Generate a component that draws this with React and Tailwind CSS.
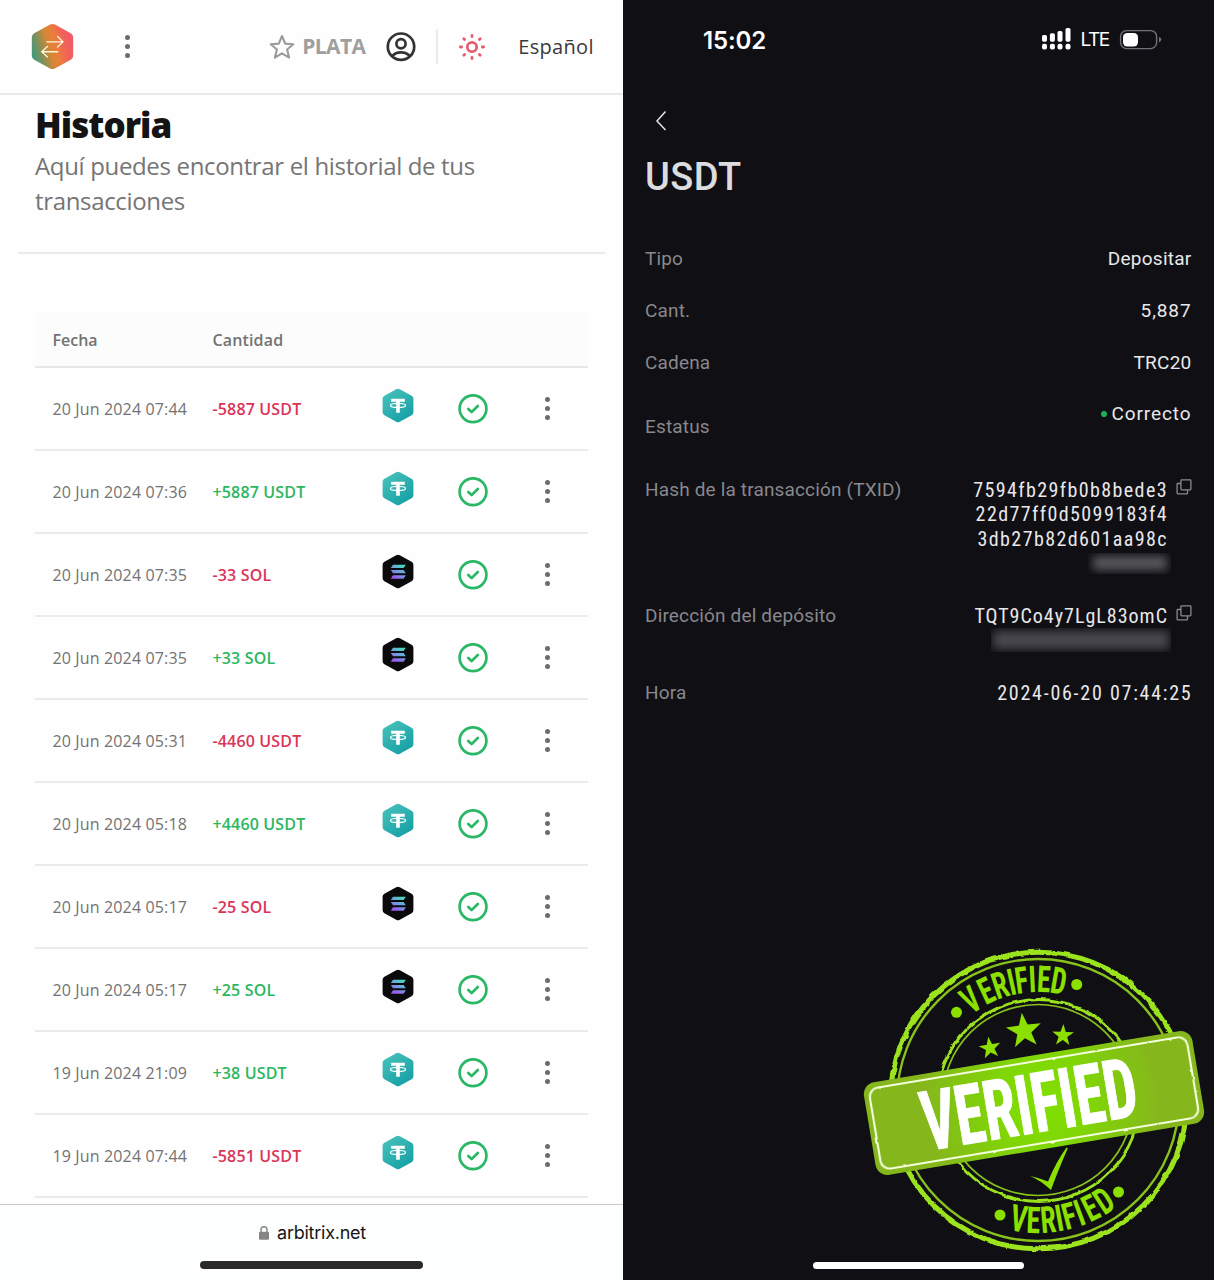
import React from "react";

const transactions = [
  ["20 Jun 2024 07:44", "-5887 USDT"],
  ["20 Jun 2024 07:36", "+5887 USDT"],
  ["20 Jun 2024 07:35", "-33 SOL"],
  ["20 Jun 2024 07:35", "+33 SOL"],
  ["20 Jun 2024 05:31", "-4460 USDT"],
  ["20 Jun 2024 05:18", "+4460 USDT"],
  ["20 Jun 2024 05:17", "-25 SOL"],
  ["20 Jun 2024 05:17", "+25 SOL"],
  ["19 Jun 2024 21:09", "+38 USDT"],
  ["19 Jun 2024 07:44", "-5851 USDT"],
];

const HEX = "M14.2 1.2Q16 .2 17.8 1.2L29.6 7.7Q31.4 8.7 31.4 10.7V24.3Q31.4 26.3 29.6 27.3L17.8 33.8Q16 34.8 14.2 33.8L2.4 27.3Q.6 26.3 .6 24.3V10.7Q.6 8.7 2.4 7.7Z";

function BrandLogo() {
  return (
    <svg viewBox="0 0 32 35" className="h-[47px] w-[43px]">
      <defs>
        <linearGradient id="brand" x1="0" y1=".65" x2="1" y2=".35">
          <stop offset="0" stopColor="#3f9a7c" />
          <stop offset=".2" stopColor="#80905a" />
          <stop offset=".42" stopColor="#d68734" />
          <stop offset=".58" stopColor="#ea7d3c" />
          <stop offset=".82" stopColor="#f2605c" />
          <stop offset="1" stopColor="#ee5c68" />
        </linearGradient>
      </defs>
      <path d={HEX} fill="url(#brand)" />
      <path d="M11.8 14H23.6M19.8 10.1L23.8 14L19.8 17.9M20 21.4H8.2M12.2 17.5L8 21.4L12.2 25.3" fill="none" stroke="#fff7d8" strokeWidth="1" strokeLinecap="round" />
    </svg>
  );
}

function TetherIcon() {
  return (
    <svg viewBox="0 0 32 35" className="h-[35px] w-8">
      <defs>
        <linearGradient id="tether" x1="0" y1="0" x2=".7" y2="1">
          <stop offset="0" stopColor="#4cc4bb" />
          <stop offset="1" stopColor="#16a0a6" />
        </linearGradient>
      </defs>
      <path d={HEX} fill="url(#tether)" />
      <path d="M9.2 10.8H22.8V13.7H17.8V24.8H14.2V13.7H9.2Z" fill="#fff" />
      <ellipse cx="16" cy="17.4" rx="7.5" ry="2.1" fill="none" stroke="#fff" strokeWidth="1.3" />
    </svg>
  );
}

function SolanaIcon() {
  return (
    <svg viewBox="0 0 32 35" className="h-[35px] w-8">
      <defs>
        <linearGradient id="solana" gradientUnits="userSpaceOnUse" x1="21" y1="10" x2="12" y2="25">
          <stop offset="0" stopColor="#3fe3b4" />
          <stop offset=".5" stopColor="#6f9fe0" />
          <stop offset="1" stopColor="#a04df0" />
        </linearGradient>
      </defs>
      <path d={HEX} fill="#0a0a0d" />
      <path d="M11 10.8H23.8L21.6 14.1H8.8ZM8.8 16H21.6L23.8 19.3H11ZM11 21.3H23.8L21.6 24.7H8.8Z" fill="url(#solana)" />
    </svg>
  );
}

function CheckIcon() {
  return (
    <svg viewBox="0 0 30 30" className="size-[30px]" fill="none" stroke="#2bb866">
      <circle cx="15" cy="14.7" r="13.4" strokeWidth="2.7" />
      <path d="M10.3 15L13.6 18.1L19.8 12" strokeWidth="2.7" strokeLinecap="round" strokeLinejoin="round" />
    </svg>
  );
}

function Kebab() {
  return (
    <span className="flex flex-col items-center gap-[3.5px]">
      <i className="size-[5.3px] rounded-full bg-[#6c6c6c]" />
      <i className="size-[5.3px] rounded-full bg-[#6c6c6c]" />
      <i className="size-[5.3px] rounded-full bg-[#6c6c6c]" />
    </span>
  );
}

function CopyIcon() {
  return (
    <svg viewBox="0 0 16 16" className="size-4 shrink-0" fill="none" stroke="#8b8a90" strokeWidth="1.3">
      <rect x="4.9" y=".9" width="10" height="10" rx=".8" />
      <path d="M4.9 4.5H1.8Q1.1 4.5 1.1 5.2V14Q1.1 14.9 2 14.9H10.8Q11.5 14.9 11.5 14.2V11" />
    </svg>
  );
}

function Header() {
  return (
    <header className="flex h-[95px] shrink-0 items-center border-b-2 border-[#e9e9e9] pl-[31px]">
      <BrandLogo />
      <div className="ml-[51px]"><Kebab /></div>
      <svg viewBox="0 0 26 26" className="ml-[139px] size-[26px]" fill="none" stroke="#9b9b9b" strokeWidth="2.1" strokeLinejoin="round">
        <path d="M13 2L16.2 9.6L24.3 10.2L18.1 15.5L20.1 23.6L13 19.3L5.9 23.6L7.9 15.5L1.7 10.2L9.8 9.6Z" />
      </svg>
      <span className="ml-[7px] w-[64px] text-[21px] font-bold tracking-[-0.65px] text-[#9f9f9f]">PLATA</span>
      <svg viewBox="0 0 30 30" className="ml-5 size-[30px]" fill="none" stroke="#333" strokeWidth="2.7">
        <circle cx="15" cy="14.7" r="13.2" />
        <circle cx="15" cy="11.7" r="4.6" />
        <path d="M6 24.2C10.5 19.1 19.5 19.1 24 24.2" />
      </svg>
      <span className="ml-5 h-[35px] w-[2px] bg-[#ebebeb]" />
      <svg viewBox="0 0 28 28" className="ml-5 size-7" fill="none" stroke="#e55a6d" strokeLinecap="round">
        <circle cx="14" cy="14" r="4.7" strokeWidth="2.7" />
        <path strokeWidth="2.8" d="M14 2.4V3.6M14 24.4V25.6M2.4 14H3.6M24.4 14H25.6M5.8 5.8L6.6 6.6M21.4 21.4L22.2 22.2M5.8 22.2L6.6 21.4M21.4 6.6L22.2 5.8" />
      </svg>
      <span className="ml-[32px] text-[20px] tracking-[0.3px] text-[#3a3a3a]">Español</span>
    </header>
  );
}

function TransactionRow({ date, amount }) {
  return (
    <div className="flex h-[83px] items-center border-b-2 border-[#ebebeb] pl-[17.5px]">
      <span className="w-[160px] tracking-[0.14px] text-[#737373]">{date}</span>
      <span className={amount[0] === "-" ? "w-[169px] font-semibold tracking-[0.15px] text-[#da3558]" : "w-[169px] font-semibold tracking-[0.15px] text-[#2bb760]"}>{amount}</span>
      <span className="mb-[6px] w-8">{amount.endsWith("SOL") ? <SolanaIcon /> : <TetherIcon />}</span>
      <span className="ml-[44.5px]"><CheckIcon /></span>
      <span className="ml-[56.5px]"><Kebab /></span>
    </div>
  );
}

function HistoryScreen() {
  return (
    <main className="flex h-[1280px] w-[623px] shrink-0 flex-col bg-[#fefefe] font-['Open_Sans',sans-serif]">
      <Header />
      <section className="mx-[18px] h-[159px] shrink-0 border-b-2 border-[#ebebeb] pl-[17px] pt-2">
        <h1 className="text-[35px] font-extrabold leading-[44px] tracking-[-1px] text-[#141414]">Historia</h1>
        <p className="pt-px text-[24px] leading-[35px] tracking-[-0.34px] text-[#757575]">Aquí puedes encontrar el historial de tus<br />transacciones</p>
      </section>
      <section className="ml-[35px] mt-[58px] w-[553px] shrink-0 text-[16px]">
        <div className="flex h-[56px] items-center border-b-2 border-[#e7e7e7] bg-[#fcfcfc] pl-[17.5px] pt-[2px] font-semibold text-[#737373]">
          <span className="w-[160px]">Fecha</span>
          <span className="tracking-[0.15px]">Cantidad</span>
        </div>
        {transactions.map(([date, amount], i) => <TransactionRow key={i} date={date} amount={amount} />)}
      </section>
      <footer className="mt-auto flex h-[76px] flex-col items-center border-t border-[#c6cacb] bg-[#fdfefe] pt-[14px] font-[Inter,sans-serif]">
        <div className="flex items-center gap-2 pl-[2px] text-[18px] leading-7 tracking-[-0.25px] text-[#161616]">
          <svg viewBox="0 0 10 14" className="h-[14px] w-[10px]">
            <rect y="5.8" width="10" height="8" rx="1.3" fill="#858585" />
            <path d="M2 6.5V3.8Q2 .8 5 .8Q8 .8 8 3.8V6.5" fill="none" stroke="#858585" strokeWidth="1.4" />
          </svg>
          arbitrix.net
        </div>
        <div className="mt-[14px] h-[8px] w-[223px] rounded-full bg-[#292929]" />
      </footer>
    </main>
  );
}

function StatusBar() {
  return (
    <div className="flex h-[80px] items-center pl-[80px] font-[Inter,sans-serif] text-white">
      <span className="w-[338px] pt-[2px] text-[24px] font-semibold tracking-[-0.15px]">15:02</span>
      <svg viewBox="0 0 34 22" className="-mt-[2px] h-[22px] w-[34px]" fill="#fff">
        <rect x="1" y="7" width="5" height="6.7" rx="1.6" /><rect x="8.9" y="5.2" width="5" height="8.5" rx="1.6" /><rect x="16.5" y="3" width="5" height="10.7" rx="1.6" /><rect x="24.5" y="0" width="5" height="13.7" rx="1.6" />
        <rect x="1" y="15.8" width="5" height="5.6" rx="1.9" /><rect x="8.9" y="15.8" width="5" height="5.6" rx="1.9" /><rect x="16.5" y="15.8" width="5" height="5.6" rx="1.9" /><rect x="24.5" y="15.8" width="5" height="5.6" rx="1.9" />
      </svg>
      <span className="ml-[5.5px] w-[30px] pt-px text-[19px] tracking-[-1.5px]">LTE</span>
      <svg viewBox="0 0 44 22" className="ml-[8.5px] h-[22px] w-11">
        <rect x="1.6" y="1.6" width="36" height="18" rx="6" fill="none" stroke="#737278" strokeWidth="1.4" />
        <rect x="4" y="4" width="15" height="13.4" rx="4.2" fill="#fff" />
        <path d="M40 8Q42.3 8.8 42.3 10.6T40 13.4Z" fill="#737278" />
      </svg>
    </div>
  );
}

function DetailRow({ label, children, className }) {
  return (
    <div className={className}>
      <span className="tracking-[0.16px] text-[#88888d]">{label}</span>
      <div className="text-right tracking-[0.25px] text-[#e8e8ea]">{children}</div>
    </div>
  );
}

const star = "M0-10L2.35-3.24L9.51-3.09L3.8 1.24L5.88 8.09L0 4L-5.88 8.09L-3.8 1.24L-9.51-3.09L-2.35-3.24Z";
const topLetters = [["V", -33.8], ["E", -25.4], ["R", -18.3], ["I", -12.7], ["F", -7.9], ["I", -2.7], ["E", 2.8], ["D", 9.9]];
const bottomLetters = [["V", 9.2], ["E", 2.2], ["R", -4.9], ["I", -10.2], ["F", -15], ["I", -20.2], ["E", -26], ["D", -33.2]];

function VerifiedStamp() {
  return (
    <svg viewBox="0 0 354 340" className="absolute left-[237px] top-[940px] h-[340px] w-[354px]">
      <defs>
        <radialGradient id="band" gradientUnits="userSpaceOnUse" cx="8" cy="0" r="118">
          <stop offset="0" stopColor="#80e000" />
          <stop offset=".4" stopColor="#80d606" />
          <stop offset="1" stopColor="#85b71c" />
        </radialGradient>
        <filter id="worn" x="-10%" y="-10%" width="120%" height="120%">
          <feTurbulence type="fractalNoise" baseFrequency=".09" numOctaves="3" seed="4" />
          <feDisplacementMap in="SourceGraphic" scale="3.4" xChannelSelector="R" yChannelSelector="G" />
        </filter>
        <filter id="chipped" x="-10%" y="-10%" width="120%" height="120%">
          <feTurbulence type="fractalNoise" baseFrequency=".12" numOctaves="2" seed="9" />
          <feDisplacementMap in="SourceGraphic" scale="2" xChannelSelector="R" yChannelSelector="G" />
        </filter>
      </defs>
      <g fill="none" filter="url(#worn)">
        <circle cx="178.5" cy="160.5" r="148.3" stroke="#9be31f" strokeWidth="5" />
        <circle cx="178.5" cy="160.5" r="101" stroke="#9be31f" strokeWidth="2.8" />
      </g>
      <g fill="none" stroke="#88c21b">
        <circle cx="178" cy="160" r="141" strokeWidth="2.4" />
        <circle cx="178" cy="160" r="95.5" strokeWidth="1.7" />
      </g>
      <g fill="#8be000">
        <g className="font-[Roboto,sans-serif] text-[37px] font-bold font-stretch-75%" textAnchor="middle">
          {topLetters.map(([c, a], i) => <text key={i} transform={`translate(178 160) rotate(${a}) translate(0 -108) scale(.74 1)`}>{c}</text>)}
          {bottomLetters.map(([c, a], i) => <text key={i} transform={`translate(178 160) rotate(${a}) translate(0 133) scale(.76 1)`}>{c}</text>)}
        </g>
        <circle cx="96.5" cy="72.3" r="5.5" /><circle cx="216.7" cy="44.5" r="5.5" />
        <circle cx="140" cy="275" r="5.5" /><circle cx="258.5" cy="252" r="5.5" />
        <path d={star} transform="translate(164 91) rotate(-7) scale(1.85)" />
        <path d={star} transform="translate(130 108) rotate(-9) scale(1.14)" />
        <path d={star} transform="translate(203 95.5) rotate(2) scale(1.14)" />
        <path d="M170 236Q180 238 188 241.5Q196 222 206.5 207.5L207.8 208.2Q197 233 191 250Q180 240 170 236Z" />
      </g>
      <g transform="translate(174 163) rotate(-9.5)">
        <rect x="-166.5" y="-47" width="333" height="94" rx="12" fill="url(#band)" />
        <rect x="-161" y="-41" width="322" height="82" rx="9" fill="none" stroke="#f4ffdc" strokeWidth="2.1" filter="url(#chipped)" />
        <text transform="translate(-114 29.5) scale(.71 1)" fill="#fff" stroke="#fff" strokeWidth="1" className="font-[Roboto,sans-serif] text-[83px] font-bold font-stretch-75%">VERIFIED</text>
      </g>
    </svg>
  );
}

function DepositScreen() {
  return (
    <main className="relative flex h-[1280px] w-[591px] shrink-0 flex-col bg-[#100f14] font-[Roboto,sans-serif] text-[19px] leading-[24.7px]">
      <StatusBar />
      <svg viewBox="0 0 12 22" className="ml-8 mt-[30px] h-[22px] w-3 shrink-0" fill="none" stroke="#e4e4e6" strokeWidth="1.5">
        <path d="M10.5 1.5L2 11L10.5 20" />
      </svg>
      <h2 className="ml-[22px] mt-5 text-[38px] font-medium leading-[50px] tracking-[0.4px] text-[#dcdcdf]">USDT</h2>
      <section className="ml-[22px] mt-[45px] w-[546.5px]">
        <DetailRow label="Tipo" className="flex h-[52px] justify-between">Depositar</DetailRow>
        <DetailRow label="Cant." className="flex h-[52px] justify-between"><span className="tracking-[0.9px]">5,887</span></DetailRow>
        <DetailRow label="Cadena" className="flex h-[51px] justify-between">TRC20</DetailRow>
        <DetailRow label="Estatus" className="flex h-[75.5px] items-baseline justify-between pt-[13px]">
          <span className="relative -top-4 flex items-center gap-[5px] tracking-[0.9px]"><i className="size-[6px] rounded-full bg-[#1cb15c]" />Correcto</span>
        </DetailRow>
        <DetailRow label="Hash de la transacción (TXID)" className="flex h-[126.5px] justify-between">
          <div className="flex gap-2">
            <div className="flex flex-col items-end text-[20px] font-stretch-87%">
              <span className="tracking-[1.4px]">7594fb29fb0b8bede3</span>
              <span className="tracking-[1.4px]">22d77ff0d5099183f4</span>
              <span className="tracking-[1.4px]">3db27b82d601aa98c</span>
              <span className="-mr-[3px] mt-px flex h-[21px] w-[83px] items-center justify-center overflow-hidden"><i className="h-[14px] w-[74px] bg-[#5a595e] blur-[5px]" /></span>
            </div>
            <div className="mt-px -mr-[0.5px]"><CopyIcon /></div>
          </div>
        </DetailRow>
        <DetailRow label="Dirección del depósito" className="flex h-[77px] justify-between">
          <div className="flex gap-2">
            <div className="flex flex-col items-end text-[20px] font-stretch-87%">
              <span className="tracking-[1px]">TQT9Co4y7LgL83omC</span>
              <span className="-mr-[3px] -mt-px flex h-6 w-[180px] items-center justify-center overflow-hidden"><i className="h-[18px] w-[176px] bg-[#4a494e] blur-[5px]" /></span>
            </div>
            <div className="mt-px -mr-[0.5px]"><CopyIcon /></div>
          </div>
        </DetailRow>
        <DetailRow label="Hora" className="flex justify-between"><span className="-mr-px whitespace-nowrap text-[20px] tracking-[1.75px] font-stretch-87%">2024-06-20 07:44:25</span></DetailRow>
      </section>
      <VerifiedStamp />
      <div className="mb-[11px] ml-[190px] mt-auto h-[7px] w-[211px] rounded-full bg-white" />
    </main>
  );
}

export default function App() {
  return (
    <div className="flex h-[1280px] w-[1214px] overflow-hidden">
      <HistoryScreen />
      <DepositScreen />
    </div>
  );
}
